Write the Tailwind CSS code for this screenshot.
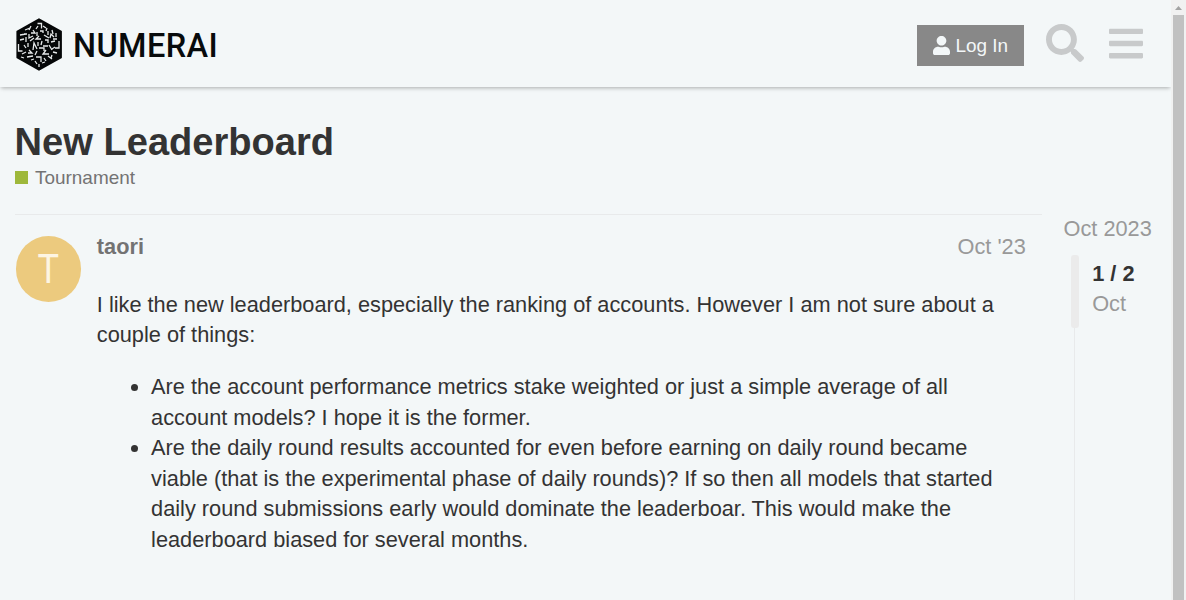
<!DOCTYPE html>
<html lang="en">
<head>
<meta charset="utf-8">
<title>New Leaderboard</title>
<script src="https://cdn.jsdelivr.net/npm/@tailwindcss/browser@4"></script>
</head>
<body class="flex h-[600px] w-[1186px] overflow-hidden bg-[#f3f7f8] font-['Liberation_Sans',Arial,sans-serif] text-[21.75px] leading-[30.45px] text-[#333]">
<div class="h-full w-[1171px] shrink-0 overflow-hidden">
  <header class="flex h-[87px] items-start pl-[15px] shadow-[0_2px_4px_-1px_rgba(0,0,0,0.3)]">
    <a class="flex items-start">
      <svg class="mt-[17px] h-[55px] w-[49px]" viewBox="15 17 49 55">
        <path d="M39 19.2 61 31.5V57.5L39 69.8 17.3 57.5V31.5Z" fill="#050708" stroke="#050708" stroke-width="1.8" stroke-linejoin="round"/>
        <path d="M37.5 23.5h4v5M36 29l2-3M31 26l-2 4M43 26l3 2M47 28l-1 3M25 30l5-2M33 30l2 3h-4M24 34h3M37 32v4M40 31h3v2M48 31v4M52 30l1 4M20 35l6-1M29 34v4l4-2M50 38l1-4 3 3M56 33v4M44 35l5 3M39 36l-3 3h5M20 40l4-1M26 37v5M30 41l4-3M45 40h3v3M53 39h4M18.5 44v7h4M24 45l2 3M28 43v4M33 50l1-7 3 6M38 42v4M42 41l-1 4M51 42l4-1M59 41v7h-4M43 46h5M49 45l3 5M22 54l4-2M29 50l3 3h-4M37 51l-2 4M39 48h5v3M46 50l-3 4h6M53 52l4 1M27 57l6-1M31 60l3-1M36 57h5v5M44 58l2 3M48 56l4 3M52 55l-1 3M35 61l2 3M39 64v3M42 63l3-1M55 47l-3 2M21 57l3 1" fill="none" stroke="#e6e9ea" stroke-width="1.3"/>
      </svg>
      <span class="mt-[26px] ml-[9px] font-['Roboto',sans-serif] text-[32.500px] leading-[41px] font-medium tracking-[0.4px] whitespace-nowrap text-[#080b0c]">NUMERAI</span>
    </a>
    <div class="mt-[23px] ml-auto flex items-start">
      <button class="mt-[2px] flex h-[41px] w-[107px] items-center bg-[#888] pl-4 text-[18.94px] leading-[20px] text-[#f3f7f8]">
        <svg class="mr-[5.500px] h-[19px] w-[17px]" viewBox="0 0 448 512" preserveAspectRatio="none" fill="currentColor"><path d="M224 256c70.700 0 128-57.300 128-128S294.700 0 224 0 96 57.300 96 128s57.300 128 128 128zm89.600 32h-16.700c-22.200 10.200-46.900 16-72.900 16s-50.600-5.800-72.900-16h-16.700C60.200 288 0 348.200 0 422.400V464c0 26.500 21.500 48 48 48h352c26.500 0 48-21.500 48-48v-41.600c0-74.200-60.200-134.400-134.400-134.400z"/></svg>
        <span>Log In</span>
      </button>
      <svg class="mt-[0.500px] ml-[22px] h-[38px] w-[38px] text-[#c8cacb]" viewBox="0 0 512 512" fill="currentColor"><path d="M505 442.700L405.300 343c-4.500-4.500-10.600-7-17-7H372c27.600-35.300 44-79.700 44-128C416 93.100 322.900 0 208 0S0 93.100 0 208s93.100 208 208 208c48.300 0 92.700-16.400 128-44v16.300c0 6.400 2.500 12.500 7 17l99.700 99.700c9.400 9.400 24.600 9.400 33.900 0l28.300-28.300c9.400-9.400 9.400-24.600.1-34zM208 336c-70.700 0-128-57.200-128-128 0-70.700 57.200-128 128-128 70.700 0 128 57.200 128 128 0 70.700-57.200 128-128 128z"/></svg>
      <svg class="mt-[0.500px] mr-[28px] ml-[25px] h-[39px] w-[34px] text-[#c8cacb]" viewBox="0 0 448 512" fill="currentColor"><path d="M16 132h416c8.800 0 16-7.200 16-16V76c0-8.800-7.200-16-16-16H16C7.200 60 0 67.200 0 76v40c0 8.800 7.200 16 16 16zm0 160h416c8.800 0 16-7.200 16-16v-40c0-8.800-7.200-16-16-16H16c-8.800 0-16 7.200-16 16v40c0 8.800 7.200 16 16 16zm0 160h416c8.800 0 16-7.200 16-16v-40c0-8.800-7.200-16-16-16H16c-8.800 0-16 7.200-16 16v40c0 8.800 7.200 16 16 16z"/></svg>
    </div>
  </header>

  <div class="pt-8 pl-[14.600px]">
    <h1 class="text-[38.09px] leading-[46px] font-bold">New Leaderboard</h1>
    <div class="flex h-[26px] items-start text-[18.94px] leading-[26px] text-[#737373]">
      <span class="mt-[6px] mr-[7.400px] h-[13px] w-[13px] bg-[#9eb83b]"></span>Tournament
    </div>
  </div>

  <div class="mt-[23px] flex pl-[15px]">
    <article class="flex w-[1027px] border-t border-[#e8eaeb] pt-[17px]">
      <div class="mt-[4px] ml-px flex h-[66px] w-[65px] shrink-0 items-center justify-center rounded-full bg-[#ecca7e]">
        <span class="scale-x-[0.88] font-['Roboto',sans-serif] text-[41px] leading-[48px] text-[#fdf5e3]">T</span>
      </div>
      <div class="ml-[15.800px] w-[929px]">
        <div class="flex justify-between">
          <span class="font-bold text-[#737373]">taori</span>
          <span class="text-[#999]">Oct '23</span>
        </div>
        <p class="mt-[27.300px]">I like the new leaderboard, especially the ranking of accounts. However I am not sure about a couple of things:</p>
        <ul class="mt-[21.750px] list-disc pl-[54.300px]">
          <li>Are the account performance metrics stake weighted or just a simple average of all account models? I hope it is the former.</li>
          <li>Are the daily round results accounted for even before earning on daily round became viable (that is the experimental phase of daily rounds)? If so then all models that started daily round submissions early would dominate the leaderboar. This would make the leaderboard biased for several months.</li>
        </ul>
      </div>
    </article>
    <aside class="ml-[21.500px] text-[#999]">
      <div class="whitespace-nowrap">Oct 2023</div>
      <div class="mt-[10.500px] ml-[7.500px] flex">
        <div class="flex w-2 flex-col">
          <div class="h-[73px] w-2 rounded-[3px] bg-[#ebebeb]"></div>
          <div class="ml-[3px] h-[300px] w-px bg-[#e8eaeb]"></div>
        </div>
        <div class="mt-[4px] ml-[13.200px]">
          <div class="font-bold text-[#333]">1 / 2</div>
          <div class="-mt-[0.450px]">Oct</div>
        </div>
      </div>
    </aside>
  </div>
</div>
<div class="flex h-full w-[15px] flex-col items-center bg-[#f1f1f1]">
  <svg class="h-[15px] w-[15px] shrink-0" viewBox="0 0 15 15"><path d="M4 10 7.500 6 11 10Z" fill="#a3a3a3"/></svg>
  <div class="w-[11px] grow bg-[#c1c1c1]"></div>
</div>
</body>
</html>
